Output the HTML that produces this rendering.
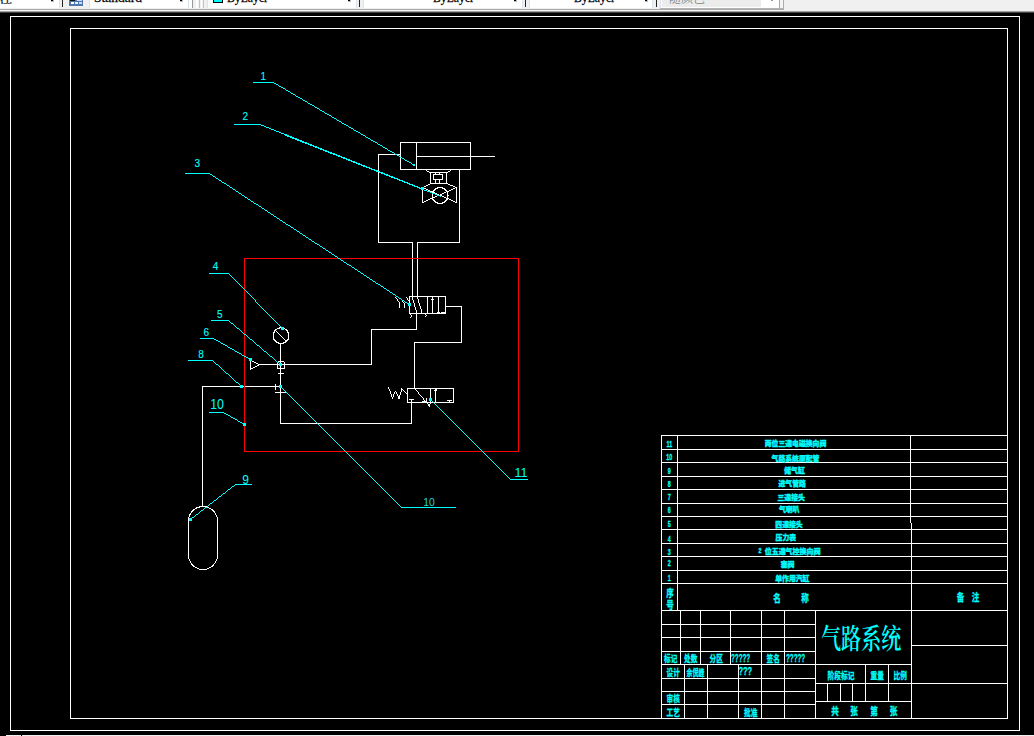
<!DOCTYPE html>
<html lang="zh"><head><meta charset="utf-8"><title>气路系统</title>
<style>
html,body{margin:0;padding:0;background:#000;}
body{width:1034px;height:736px;overflow:hidden;position:relative;font-family:"Liberation Serif","Noto Serif CJK SC",serif;}
svg{position:absolute;left:0;top:0;}
#bl{position:absolute;top:735px;height:1px;background:#f0f0f0;}
</style></head><body>
<svg width="1034" height="736" viewBox="0 0 1034 736">
<g transform="translate(0.5,0.5)" shape-rendering="crispEdges" stroke-width="1" stroke-linecap="square" fill="none">
<rect x="10" y="16" width="1009" height="714" stroke="#fff" fill="none"/>
<rect x="70" y="28" width="937" height="690" stroke="#fff" fill="none"/>
<rect x="400" y="142" width="70" height="27" stroke="#fff" fill="none"/>
<line x1="416" y1="142" x2="416" y2="169" stroke="#fff" />
<line x1="416" y1="156" x2="494" y2="156" stroke="#fff" />
<line x1="400" y1="154" x2="378" y2="154" stroke="#fff" />
<line x1="378" y1="154" x2="378" y2="242" stroke="#fff" />
<line x1="378" y1="242" x2="412" y2="242" stroke="#fff" />
<line x1="412" y1="242" x2="412" y2="296" stroke="#fff" />
<line x1="417" y1="296" x2="417" y2="242" stroke="#fff" />
<line x1="417" y1="242" x2="459" y2="242" stroke="#fff" />
<line x1="459" y1="242" x2="459" y2="169" stroke="#fff" />
<path d="M425.5 170H426.5M426.5 171H428.5M428.5 172H430.5" stroke="#fff" stroke-linecap="butt" />
<path d="M445.5 172H447.5M447.5 171H449.5M449.5 170H450.5" stroke="#fff" stroke-linecap="butt" />
<rect x="430" y="172" width="16" height="11" stroke="#fff" fill="none"/>
<rect x="433" y="174" width="9" height="5" stroke="#fff" fill="none"/>
<line x1="435" y1="172" x2="435" y2="174" stroke="#fff" />
<line x1="439" y1="172" x2="439" y2="174" stroke="#fff" />
<line x1="435" y1="179" x2="435" y2="183" stroke="#fff" />
<line x1="439" y1="179" x2="439" y2="183" stroke="#fff" />
<path d="M421.5 187H423.5M423.5 186H425.5M425.5 185H427.5M427.5 184H429.5M429.5 183H430.5" stroke="#fff" stroke-linecap="butt" />
<path d="M445.5 183H447.5M447.5 184H449.5M449.5 185H452.5M452.5 186H454.5M454.5 187H456.5" stroke="#fff" stroke-linecap="butt" />
<line x1="422" y1="187" x2="422" y2="202" stroke="#fff" />
<line x1="456" y1="187" x2="456" y2="202" stroke="#fff" />
<path d="M421.5 187H423.5M423.5 188H425.5M425.5 189H427.5M427.5 190H429.5M429.5 191H432.5M432.5 192H434.5M434.5 193H436.5M436.5 194H438.5M438.5 195H441.5M441.5 196H443.5M443.5 197H445.5M445.5 198H448.5M448.5 199H450.5M450.5 200H452.5M452.5 201H454.5M454.5 202H456.5" stroke="#fff" stroke-linecap="butt" />
<path d="M421.5 202H423.5M423.5 201H425.5M425.5 200H427.5M427.5 199H429.5M429.5 198H432.5M432.5 197H434.5M434.5 196H436.5M436.5 195H439.5M439.5 194H441.5M441.5 193H443.5M443.5 192H445.5M445.5 191H448.5M448.5 190H450.5M450.5 189H452.5M452.5 188H454.5M454.5 187H456.5" stroke="#fff" stroke-linecap="butt" />
<path d="M436.5 187H442.5M434.5 188H437.5M441.5 188H444.5M433.5 189H435.5M443.5 189H445.5M432.5 190H434.5M444.5 190H446.5M431.5 191H433.5M445.5 191H447.5M431.5 192H432.5M446.5 192H447.5M431.5 193H432.5M446.5 193H447.5M431.5 194H432.5M446.5 194H447.5M431.5 195H432.5M446.5 195H448.5M431.5 196H432.5M446.5 196H447.5M431.5 197H432.5M446.5 197H447.5M431.5 198H432.5M446.5 198H447.5M431.5 199H433.5M445.5 199H447.5M432.5 200H434.5M444.5 200H446.5M433.5 201H435.5M443.5 201H445.5M434.5 202H437.5M441.5 202H444.5M436.5 203H442.5" stroke="#fff" stroke-linecap="butt"/>
<rect x="409" y="296" width="36" height="17" stroke="#fff" fill="none"/>
<line x1="427" y1="296" x2="427" y2="313" stroke="#fff" />
<line x1="432" y1="297" x2="432" y2="313" stroke="#fff" />
<line x1="438" y1="296" x2="438" y2="313" stroke="#fff" />
<path d="M412 296.5V299.5M413 299.5V302.5M414 302.5V306.5M415 306.5V309.5M416 309.5V312.5" stroke="#fff" stroke-linecap="butt" />
<path d="M417 296.5V298.5M418 298.5V302.5M419 302.5V305.5M420 305.5V308.5M421 308.5V312.5M422 312.5V313.5" stroke="#fff" stroke-linecap="butt" />
<line x1="431" y1="299" x2="431" y2="299" stroke="#fff" />
<line x1="433" y1="299" x2="433" y2="299" stroke="#fff" />
<line x1="437" y1="312" x2="439" y2="312" stroke="#fff" />
<line x1="441" y1="312" x2="444" y2="312" stroke="#fff" />
<path d="M408.5 313H409.5M409.5 314H410.5M410.5 315H411.5" stroke="#fff" stroke-linecap="butt" />
<path d="M411 314.5V316.5M410 316.5V317.5" stroke="#fff" stroke-linecap="butt" />
<path d="M423.5 313H424.5M424.5 314H425.5M425.5 315H426.5" stroke="#fff" stroke-linecap="butt" />
<path d="M424.5 316H425.5M425.5 315H426.5" stroke="#fff" stroke-linecap="butt" />
<path d="M395 296.5V297.5M396 297.5V298.5M397 298.5V300.5M398 300.5V301.5M399 301.5V302.5" stroke="#fff" stroke-linecap="butt" />
<path d="M399 301.5V307.5" stroke="#fff" stroke-linecap="butt" />
<path d="M401 298.5V299.5M402 299.5V301.5M403 301.5V302.5M404 302.5V303.5" stroke="#fff" stroke-linecap="butt" />
<path d="M404 302.5V307.5" stroke="#fff" stroke-linecap="butt" />
<path d="M406 296.5V297.5M407 297.5V299.5M408 299.5V300.5M409 300.5V302.5" stroke="#fff" stroke-linecap="butt" />
<line x1="445" y1="306" x2="461" y2="306" stroke="#fff" />
<line x1="461" y1="306" x2="461" y2="342" stroke="#fff" />
<line x1="461" y1="342" x2="414" y2="342" stroke="#fff" />
<line x1="414" y1="342" x2="414" y2="388" stroke="#fff" />
<line x1="416" y1="313" x2="416" y2="329" stroke="#fff" />
<line x1="416" y1="329" x2="371" y2="329" stroke="#fff" />
<line x1="371" y1="329" x2="371" y2="364" stroke="#fff" />
<line x1="371" y1="364" x2="259" y2="364" stroke="#fff" />
<rect x="407" y="388" width="46" height="14" stroke="#fff" fill="none"/>
<line x1="430" y1="388" x2="430" y2="402" stroke="#fff" />
<line x1="435" y1="388" x2="435" y2="402" stroke="#fff" />
<path d="M415 388.5V389.5M416 389.5V390.5M417 390.5V391.5M418 391.5V393.5M419 393.5V394.5M420 394.5V395.5M421 395.5V396.5M422 396.5V397.5M423 397.5V399.5M424 399.5V400.5M425 400.5V401.5" stroke="#fff" stroke-linecap="butt" />
<line x1="422" y1="401" x2="426" y2="401" stroke="#fff" />
<line x1="426" y1="401" x2="426" y2="398" stroke="#fff" />
<path d="M435 387.5V389.5M434 389.5V390.5" stroke="#fff" stroke-linecap="butt" />
<path d="M435 387.5V388.5M436 388.5V390.5" stroke="#fff" stroke-linecap="butt" />
<line x1="409" y1="399" x2="413" y2="399" stroke="#fff" />
<line x1="447" y1="400" x2="451" y2="400" stroke="#fff" />
<line x1="449" y1="400" x2="449" y2="402" stroke="#fff" />
<path d="M427 401.5V403.5M428 403.5V405.5M429 405.5V406.5" stroke="#fff" stroke-linecap="butt" />
<path d="M430 401.5V403.5M429 403.5V406.5" stroke="#fff" stroke-linecap="butt" />
<path d="M388 386.5V388.5M389 388.5V390.5M390 390.5V393.5M391 393.5V396.5M392 396.5V398.5" stroke="#fff" stroke-linecap="butt" />
<path d="M395 390.5V391.5M394 391.5V393.5M393 393.5V396.5M392 396.5V398.5" stroke="#fff" stroke-linecap="butt" />
<path d="M395 390.5V391.5M396 391.5V393.5M397 393.5V395.5M398 395.5V397.5M399 397.5V398.5" stroke="#fff" stroke-linecap="butt" />
<path d="M401 387.5V391.5M400 391.5V394.5M399 394.5V397.5M398 397.5V398.5" stroke="#fff" stroke-linecap="butt" />
<path d="M401 387.5V388.5M402 388.5V389.5M403 389.5V390.5M404 390.5V391.5M405 391.5V392.5M406 392.5V393.5M407 393.5V394.5" stroke="#fff" stroke-linecap="butt" />
<line x1="411" y1="399" x2="411" y2="423" stroke="#fff" />
<line x1="411" y1="423" x2="280" y2="423" stroke="#fff" />
<line x1="280" y1="423" x2="280" y2="344" stroke="#fff" />
<path d="M278.5 327H282.5M276.5 328H279.5M281.5 328H284.5M274.5 329H276.5M284.5 329H286.5M273.5 330H275.5M285.5 330H287.5M273.5 331H274.5M286.5 331H287.5M272.5 332H274.5M286.5 332H288.5M272.5 333H273.5M287.5 333H288.5M272.5 334H273.5M287.5 334H288.5M272.5 335H273.5M287.5 335H288.5M272.5 336H273.5M287.5 336H288.5M272.5 337H273.5M287.5 337H288.5M272.5 338H273.5M287.5 338H288.5M272.5 339H274.5M286.5 339H288.5M273.5 340H275.5M285.5 340H287.5M274.5 341H276.5M284.5 341H286.5M275.5 342H278.5M282.5 342H285.5M277.5 343H283.5" stroke="#fff" stroke-linecap="butt"/>
<path d="M274.5 330H275.5M275.5 331H276.5M276.5 332H277.5M277.5 333H278.5M278.5 334H279.5M279.5 335H280.5M280.5 336H281.5M281.5 337H282.5M282.5 338H283.5M283.5 339H284.5M284.5 340H285.5M285.5 341H286.5" stroke="#fff" stroke-linecap="butt" />
<line x1="250" y1="360" x2="250" y2="369" stroke="#fff" />
<path d="M249.5 369H250.5M250.5 368H252.5M252.5 367H254.5M254.5 366H256.5M256.5 365H258.5M258.5 364H259.5" stroke="#fff" stroke-linecap="butt" />
<path d="M249.5 360H251.5M251.5 361H253.5M253.5 362H255.5M255.5 363H257.5M257.5 364H259.5" stroke="#fff" stroke-linecap="butt" />
<line x1="277" y1="362" x2="277" y2="367" stroke="#fff" />
<line x1="284" y1="362" x2="284" y2="367" stroke="#fff" />
<line x1="278" y1="361" x2="283" y2="361" stroke="#fff" />
<line x1="277" y1="368" x2="284" y2="368" stroke="#fff" />
<line x1="278" y1="373" x2="283" y2="373" stroke="#fff" />
<line x1="202" y1="386" x2="280" y2="386" stroke="#fff" />
<line x1="275" y1="384" x2="275" y2="389" stroke="#fff" />
<line x1="275" y1="392" x2="286" y2="392" stroke="#fff" />
<line x1="202" y1="386" x2="202" y2="506" stroke="#fff" />
<rect x="188" y="506" width="29" height="63" rx="14.5" ry="14.5" stroke="#fff" fill="none"/>
<rect x="244" y="258" width="274" height="193" stroke="#f00" fill="none"/>
<line x1="253" y1="82" x2="273" y2="82" stroke="#0ff" />
<path d="M272.5 82H273.5M273.5 83H275.5M275.5 84H277.5M277.5 85H278.5M278.5 86H280.5M280.5 87H282.5M282.5 88H284.5M284.5 89H285.5M285.5 90H287.5M287.5 91H289.5M289.5 92H290.5M290.5 93H292.5M292.5 94H294.5M294.5 95H295.5M295.5 96H297.5M297.5 97H299.5M299.5 98H301.5M301.5 99H302.5M302.5 100H304.5M304.5 101H306.5M306.5 102H307.5M307.5 103H309.5M309.5 104H311.5M311.5 105H313.5M313.5 106H314.5M314.5 107H316.5M316.5 108H318.5M318.5 109H319.5M319.5 110H321.5M321.5 111H323.5M323.5 112H324.5M324.5 113H326.5M326.5 114H328.5M328.5 115H330.5M330.5 116H331.5M331.5 117H333.5M333.5 118H335.5M335.5 119H336.5M336.5 120H338.5M338.5 121H340.5M340.5 122H341.5M341.5 123H343.5M343.5 124H345.5M345.5 125H347.5M347.5 126H348.5M348.5 127H350.5M350.5 128H352.5M352.5 129H353.5M353.5 130H355.5M355.5 131H357.5M357.5 132H359.5M359.5 133H360.5M360.5 134H362.5M362.5 135H364.5M364.5 136H365.5M365.5 137H367.5M367.5 138H369.5M369.5 139H370.5M370.5 140H372.5M372.5 141H374.5M374.5 142H376.5M376.5 143H377.5M377.5 144H379.5M379.5 145H381.5M381.5 146H382.5M382.5 147H384.5M384.5 148H386.5M386.5 149H387.5M387.5 150H389.5M389.5 151H391.5M391.5 152H393.5M393.5 153H394.5M394.5 154H396.5M396.5 155H398.5M398.5 156H399.5M399.5 157H401.5M401.5 158H403.5M403.5 159H404.5M404.5 160H406.5M406.5 161H408.5M408.5 162H410.5M410.5 163H411.5M411.5 164H413.5M413.5 165H414.5" stroke="#0ff" stroke-linecap="butt" />
<rect x="412.0" y="163.0" width="2" height="2" fill="#0ff" stroke="none"/>
<text transform="translate(262.7,79.3) scale(1.0,1)" font-size="10" fill="#0ff" text-anchor="middle" font-family="&quot;Liberation Sans&quot;,&quot;Noto Sans CJK SC&quot;,sans-serif" font-weight="normal"  stroke="#0ff" stroke-width="0.1">1</text>
<line x1="234" y1="124" x2="259" y2="124" stroke="#0ff" />
<path d="M259.5 124H260.5M260.5 125H263.5M263.5 126H265.5M265.5 127H268.5M268.5 128H270.5M270.5 129H273.5M273.5 130H275.5M275.5 131H278.5M278.5 132H280.5M280.5 133H283.5M283.5 134H286.5M286.5 135H288.5M288.5 136H291.5M291.5 137H293.5M293.5 138H296.5M296.5 139H298.5M298.5 140H301.5M301.5 141H303.5M303.5 142H306.5M306.5 143H308.5M308.5 144H311.5M311.5 145H313.5M313.5 146H316.5M316.5 147H318.5M318.5 148H321.5M321.5 149H323.5M323.5 150H326.5M326.5 151H328.5M328.5 152H331.5M331.5 153H334.5M334.5 154H336.5M336.5 155H339.5M339.5 156H341.5M341.5 157H344.5M344.5 158H346.5M346.5 159H349.5M349.5 160H351.5M351.5 161H354.5M354.5 162H356.5M356.5 163H359.5M359.5 164H361.5M361.5 165H364.5M364.5 166H366.5M366.5 167H369.5M369.5 168H371.5M371.5 169H374.5M374.5 170H377.5M377.5 171H379.5M379.5 172H382.5M382.5 173H384.5M384.5 174H387.5M387.5 175H389.5M389.5 176H392.5M392.5 177H394.5M394.5 178H397.5M397.5 179H399.5M399.5 180H402.5M402.5 181H404.5M404.5 182H407.5M407.5 183H409.5M409.5 184H412.5M412.5 185H414.5M414.5 186H417.5M417.5 187H419.5M419.5 188H422.5M422.5 189H423.5" stroke="#0ff" stroke-linecap="butt" />
<path d="M284.5 135H286.5M286.5 136H289.5M289.5 137H291.5M291.5 138H294.5M294.5 139H296.5M296.5 140H299.5M299.5 141H301.5M301.5 142H304.5M304.5 143H307.5M307.5 144H309.5M309.5 145H312.5M312.5 146H314.5M314.5 147H317.5M317.5 148H319.5M319.5 149H322.5M322.5 150H324.5M324.5 151H327.5M327.5 152H329.5M329.5 153H332.5M332.5 154H335.5M335.5 155H337.5M337.5 156H340.5M340.5 157H342.5M342.5 158H345.5M345.5 159H347.5M347.5 160H350.5M350.5 161H352.5M352.5 162H355.5M355.5 163H357.5M357.5 164H360.5M360.5 165H362.5M362.5 166H365.5M365.5 167H368.5M368.5 168H370.5M370.5 169H373.5M373.5 170H375.5M375.5 171H378.5M378.5 172H380.5M380.5 173H383.5M383.5 174H385.5M385.5 175H388.5M388.5 176H390.5M390.5 177H393.5M393.5 178H396.5M396.5 179H398.5M398.5 180H401.5M401.5 181H403.5M403.5 182H406.5M406.5 183H408.5M408.5 184H411.5M411.5 185H413.5M413.5 186H416.5M416.5 187H418.5M418.5 188H421.5M421.5 189H423.5M423.5 190H426.5M426.5 191H429.5M429.5 192H431.5M431.5 193H434.5M434.5 194H436.5M436.5 195H439.5M439.5 196H440.5" stroke="#0ff" stroke-linecap="butt" />
<rect x="420.5" y="186.5" width="3" height="3" fill="#0ff" stroke="none"/>
<text transform="translate(244.7,119.2) scale(1.0,1)" font-size="10" fill="#0ff" text-anchor="middle" font-family="&quot;Liberation Sans&quot;,&quot;Noto Sans CJK SC&quot;,sans-serif" font-weight="normal"  stroke="#0ff" stroke-width="0.1">2</text>
<line x1="185" y1="173" x2="209" y2="173" stroke="#0ff" />
<path d="M208.5 173H209.5M209.5 174H211.5M211.5 175H212.5M212.5 176H214.5M214.5 177H215.5M215.5 178H217.5M217.5 179H218.5M218.5 180H220.5M220.5 181H221.5M221.5 182H223.5M223.5 183H225.5M225.5 184H226.5M226.5 185H228.5M228.5 186H229.5M229.5 187H231.5M231.5 188H232.5M232.5 189H234.5M234.5 190H235.5M235.5 191H237.5M237.5 192H238.5M238.5 193H240.5M240.5 194H241.5M241.5 195H243.5M243.5 196H244.5M244.5 197H246.5M246.5 198H247.5M247.5 199H249.5M249.5 200H250.5M250.5 201H252.5M252.5 202H253.5M253.5 203H255.5M255.5 204H257.5M257.5 205H258.5M258.5 206H260.5M260.5 207H261.5M261.5 208H263.5M263.5 209H264.5M264.5 210H266.5M266.5 211H267.5M267.5 212H269.5M269.5 213H270.5M270.5 214H272.5M272.5 215H273.5M273.5 216H275.5M275.5 217H276.5M276.5 218H278.5M278.5 219H279.5M279.5 220H281.5M281.5 221H282.5M282.5 222H284.5M284.5 223H285.5M285.5 224H287.5M287.5 225H289.5M289.5 226H290.5M290.5 227H292.5M292.5 228H293.5M293.5 229H295.5M295.5 230H296.5M296.5 231H298.5M298.5 232H299.5M299.5 233H301.5M301.5 234H302.5M302.5 235H304.5M304.5 236H305.5M305.5 237H307.5M307.5 238H308.5M308.5 239H310.5M310.5 240H311.5M311.5 241H313.5M313.5 242H314.5M314.5 243H316.5M316.5 244H318.5M318.5 245H319.5M319.5 246H321.5M321.5 247H322.5M322.5 248H324.5M324.5 249H325.5M325.5 250H327.5M327.5 251H328.5M328.5 252H330.5M330.5 253H331.5M331.5 254H333.5M333.5 255H334.5M334.5 256H336.5M336.5 257H337.5M337.5 258H339.5M339.5 259H340.5M340.5 260H342.5M342.5 261H343.5M343.5 262H345.5M345.5 263H346.5M346.5 264H348.5M348.5 265H350.5M350.5 266H351.5M351.5 267H353.5M353.5 268H354.5M354.5 269H356.5M356.5 270H357.5M357.5 271H359.5M359.5 272H360.5M360.5 273H362.5M362.5 274H363.5M363.5 275H365.5M365.5 276H366.5M366.5 277H368.5M368.5 278H369.5M369.5 279H371.5M371.5 280H372.5M372.5 281H374.5M374.5 282H375.5M375.5 283H377.5M377.5 284H379.5M379.5 285H380.5M380.5 286H382.5M382.5 287H383.5M383.5 288H385.5M385.5 289H386.5M386.5 290H388.5M388.5 291H389.5M389.5 292H391.5M391.5 293H392.5M392.5 294H394.5M394.5 295H395.5M395.5 296H397.5M397.5 297H398.5M398.5 298H400.5M400.5 299H401.5M401.5 300H403.5M403.5 301H404.5M404.5 302H406.5M406.5 303H407.5M407.5 304H409.5M409.5 305H410.5" stroke="#0ff" stroke-linecap="butt" />
<rect x="407.5" y="302.5" width="3" height="3" fill="#0ff" stroke="none"/>
<text transform="translate(196.9,166.3) scale(1.0,1)" font-size="10" fill="#0ff" text-anchor="middle" font-family="&quot;Liberation Sans&quot;,&quot;Noto Sans CJK SC&quot;,sans-serif" font-weight="normal"  stroke="#0ff" stroke-width="0.1">3</text>
<line x1="209" y1="273" x2="228" y2="273" stroke="#0ff" />
<path d="M228 272.5V273.5M229 273.5V274.5M230 274.5V275.5M231 275.5V276.5M232 276.5V277.5M233 277.5V278.5M234 278.5V279.5M235 279.5V280.5M236 280.5V281.5M237 281.5V282.5M238 282.5V283.5M239 283.5V284.5M240 284.5V285.5M241 285.5V286.5M242 286.5V287.5M243 287.5V288.5M244 288.5V289.5M245 289.5V290.5M246 290.5V291.5M247 291.5V292.5M248 292.5V293.5M249 293.5V294.5M250 294.5V295.5M251 295.5V296.5M252 296.5V297.5M253 297.5V298.5M254 298.5V299.5M255 299.5V301.5M256 301.5V302.5M257 302.5V303.5M258 303.5V304.5M259 304.5V305.5M260 305.5V306.5M261 306.5V307.5M262 307.5V308.5M263 308.5V309.5M264 309.5V310.5M265 310.5V311.5M266 311.5V312.5M267 312.5V313.5M268 313.5V314.5M269 314.5V315.5M270 315.5V316.5M271 316.5V317.5M272 317.5V318.5M273 318.5V319.5M274 319.5V320.5M275 320.5V321.5M276 321.5V322.5M277 322.5V323.5M278 323.5V324.5M279 324.5V325.5M280 325.5V326.5M281 326.5V327.5M282 327.5V328.5M283 328.5V329.5" stroke="#0ff" stroke-linecap="butt" />
<rect x="280.5" y="326.5" width="3" height="3" fill="#0ff" stroke="none"/>
<text transform="translate(215.1,269.3) scale(1.0,1)" font-size="10" fill="#0ff" text-anchor="middle" font-family="&quot;Liberation Sans&quot;,&quot;Noto Sans CJK SC&quot;,sans-serif" font-weight="normal"  stroke="#0ff" stroke-width="0.1">4</text>
<line x1="211" y1="320" x2="228" y2="320" stroke="#0ff" />
<path d="M227.5 320H228.5M228.5 321H229.5M229.5 322H230.5M230.5 323H232.5M232.5 324H233.5M233.5 325H234.5M234.5 326H235.5M235.5 327H236.5M236.5 328H238.5M238.5 329H239.5M239.5 330H240.5M240.5 331H241.5M241.5 332H242.5M242.5 333H243.5M243.5 334H245.5M245.5 335H246.5M246.5 336H247.5M247.5 337H248.5M248.5 338H249.5M249.5 339H251.5M251.5 340H252.5M252.5 341H253.5M253.5 342H254.5M254.5 343H255.5M255.5 344H256.5M256.5 345H258.5M258.5 346H259.5M259.5 347H260.5M260.5 348H261.5M261.5 349H262.5M262.5 350H263.5M263.5 351H265.5M265.5 352H266.5M266.5 353H267.5M267.5 354H268.5M268.5 355H269.5M269.5 356H271.5M271.5 357H272.5M272.5 358H273.5M273.5 359H274.5M274.5 360H275.5M275.5 361H276.5M276.5 362H278.5M278.5 363H279.5M279.5 364H280.5M280.5 365H281.5" stroke="#0ff" stroke-linecap="butt" />
<rect x="278.5" y="362.5" width="3" height="3" fill="#0ff" stroke="none"/>
<text transform="translate(219.3,317) scale(1.0,1)" font-size="10" fill="#0ff" text-anchor="middle" font-family="&quot;Liberation Sans&quot;,&quot;Noto Sans CJK SC&quot;,sans-serif" font-weight="normal"  stroke="#0ff" stroke-width="0.1">5</text>
<line x1="200" y1="338" x2="213" y2="338" stroke="#0ff" />
<path d="M212.5 338H213.5M213.5 339H215.5M215.5 340H217.5M217.5 341H219.5M219.5 342H220.5M220.5 343H222.5M222.5 344H224.5M224.5 345H226.5M226.5 346H227.5M227.5 347H229.5M229.5 348H231.5M231.5 349H233.5M233.5 350H234.5M234.5 351H236.5M236.5 352H238.5M238.5 353H240.5M240.5 354H241.5M241.5 355H243.5M243.5 356H245.5M245.5 357H247.5M247.5 358H248.5M248.5 359H250.5M250.5 360H251.5" stroke="#0ff" stroke-linecap="butt" />
<rect x="248.5" y="357.5" width="3" height="3" fill="#0ff" stroke="none"/>
<text transform="translate(205.7,335) scale(1.0,1)" font-size="10" fill="#0ff" text-anchor="middle" font-family="&quot;Liberation Sans&quot;,&quot;Noto Sans CJK SC&quot;,sans-serif" font-weight="normal"  stroke="#0ff" stroke-width="0.1">6</text>
<line x1="188" y1="360" x2="212" y2="360" stroke="#0ff" />
<path d="M211.5 360H212.5M212.5 361H213.5M213.5 362H214.5M214.5 363H215.5M215.5 364H217.5M217.5 365H218.5M218.5 366H219.5M219.5 367H220.5M220.5 368H221.5M221.5 369H222.5M222.5 370H223.5M223.5 371H224.5M224.5 372H225.5M225.5 373H227.5M227.5 374H228.5M228.5 375H229.5M229.5 376H230.5M230.5 377H231.5M231.5 378H232.5M232.5 379H233.5M233.5 380H234.5M234.5 381H235.5M235.5 382H237.5M237.5 383H238.5M238.5 384H239.5M239.5 385H240.5M240.5 386H241.5M241.5 387H242.5" stroke="#0ff" stroke-linecap="butt" />
<rect x="239.5" y="384.5" width="3" height="3" fill="#0ff" stroke="none"/>
<text transform="translate(200.6,357.4) scale(1.0,1)" font-size="10" fill="#0ff" text-anchor="middle" font-family="&quot;Liberation Sans&quot;,&quot;Noto Sans CJK SC&quot;,sans-serif" font-weight="normal"  stroke="#0ff" stroke-width="0.1">8</text>
<line x1="235" y1="484" x2="251" y2="484" stroke="#0ff" />
<path d="M189.5 519H190.5M190.5 518H191.5M191.5 517H193.5M193.5 516H194.5M194.5 515H195.5M195.5 514H197.5M197.5 513H198.5M198.5 512H199.5M199.5 511H200.5M200.5 510H202.5M202.5 509H203.5M203.5 508H204.5M204.5 507H206.5M206.5 506H207.5M207.5 505H208.5M208.5 504H209.5M209.5 503H211.5M211.5 502H212.5M212.5 501H213.5M213.5 500H215.5M215.5 499H216.5M216.5 498H217.5M217.5 497H218.5M218.5 496H220.5M220.5 495H221.5M221.5 494H222.5M222.5 493H224.5M224.5 492H225.5M225.5 491H226.5M226.5 490H227.5M227.5 489H229.5M229.5 488H230.5M230.5 487H231.5M231.5 486H233.5M233.5 485H234.5M234.5 484H235.5" stroke="#0ff" stroke-linecap="butt" />
<rect x="188.0" y="517.0" width="3" height="3" fill="#0ff" stroke="none"/>
<text transform="translate(245,483.5) scale(1.0,1)" font-size="12" fill="#0ff" text-anchor="middle" font-family="&quot;Liberation Sans&quot;,&quot;Noto Sans CJK SC&quot;,sans-serif" font-weight="normal" >9</text>
<line x1="209" y1="412" x2="223" y2="412" stroke="#0ff" />
<path d="M222.5 412H223.5M223.5 413H225.5M225.5 414H227.5M227.5 415H229.5M229.5 416H230.5M230.5 417H232.5M232.5 418H234.5M234.5 419H236.5M236.5 420H237.5M237.5 421H239.5M239.5 422H241.5M241.5 423H243.5M243.5 424H244.5" stroke="#0ff" stroke-linecap="butt" />
<rect x="242.0" y="422.0" width="3" height="3" fill="#0ff" stroke="none"/>
<text transform="translate(216.5,408.7) scale(0.88,1)" font-size="14" fill="#0ff" text-anchor="middle" font-family="&quot;Liberation Sans&quot;,&quot;Noto Sans CJK SC&quot;,sans-serif" font-weight="normal" >10</text>
<line x1="401" y1="507" x2="455" y2="507" stroke="#0ff" />
<path d="M280.5 387H281.5M281.5 388H282.5M282.5 389H283.5M283.5 390H284.5M284.5 391H285.5M285.5 392H286.5M286.5 393H287.5M287.5 394H288.5M288.5 395H289.5M289.5 396H290.5M290.5 397H291.5M291.5 398H292.5M292.5 399H293.5M293.5 400H294.5M294.5 401H295.5M295.5 402H296.5M296.5 403H297.5M297.5 404H298.5M298.5 405H299.5M299.5 406H300.5M300.5 407H301.5M301.5 408H302.5M302.5 409H303.5M303.5 410H304.5M304.5 411H305.5M305.5 412H306.5M306.5 413H307.5M307.5 414H308.5M308.5 415H309.5M309.5 416H310.5M310.5 417H311.5M311.5 418H312.5M312.5 419H313.5M313.5 420H314.5M314.5 421H315.5M315.5 422H316.5M316.5 423H317.5M317.5 424H318.5M318.5 425H319.5M319.5 426H320.5M320.5 427H321.5M321.5 428H322.5M322.5 429H323.5M323.5 430H324.5M324.5 431H325.5M325.5 432H326.5M326.5 433H327.5M327.5 434H328.5M328.5 435H329.5M329.5 436H330.5M330.5 437H331.5M331.5 438H332.5M332.5 439H333.5M333.5 440H334.5M334.5 441H335.5M335.5 442H336.5M336.5 443H337.5M337.5 444H338.5M338.5 445H339.5M339.5 446H340.5M340.5 447H341.5M341.5 448H342.5M342.5 449H343.5M343.5 450H344.5M344.5 451H345.5M345.5 452H346.5M346.5 453H347.5M347.5 454H348.5M348.5 455H349.5M349.5 456H350.5M350.5 457H351.5M351.5 458H352.5M352.5 459H353.5M353.5 460H354.5M354.5 461H355.5M355.5 462H356.5M356.5 463H357.5M357.5 464H358.5M358.5 465H359.5M359.5 466H360.5M360.5 467H361.5M361.5 468H362.5M362.5 469H363.5M363.5 470H364.5M364.5 471H365.5M365.5 472H366.5M366.5 473H367.5M367.5 474H368.5M368.5 475H369.5M369.5 476H370.5M370.5 477H371.5M371.5 478H372.5M372.5 479H373.5M373.5 480H374.5M374.5 481H375.5M375.5 482H376.5M376.5 483H377.5M377.5 484H378.5M378.5 485H379.5M379.5 486H380.5M380.5 487H381.5M381.5 488H382.5M382.5 489H383.5M383.5 490H384.5M384.5 491H385.5M385.5 492H386.5M386.5 493H387.5M387.5 494H388.5M388.5 495H389.5M389.5 496H390.5M390.5 497H391.5M391.5 498H392.5M392.5 499H393.5M393.5 500H394.5M394.5 501H395.5M395.5 502H396.5M396.5 503H397.5M397.5 504H398.5M398.5 505H399.5M399.5 506H400.5M400.5 507H401.5" stroke="#0ff" stroke-linecap="butt" />
<rect x="278.5" y="384.5" width="3" height="3" fill="#0ff" stroke="none"/>
<text transform="translate(428.6,505.2) scale(0.9,1)" font-size="11.5" fill="#22d4dc" text-anchor="middle" font-family="&quot;Liberation Sans&quot;,&quot;Noto Sans CJK SC&quot;,sans-serif" font-weight="normal" >10</text>
<line x1="510" y1="479" x2="527" y2="479" stroke="#0ff" />
<path d="M430.5 400H431.5M431.5 401H432.5M432.5 402H433.5M433.5 403H434.5M434.5 404H435.5M435.5 405H436.5M436.5 406H437.5M437.5 407H438.5M438.5 408H439.5M439.5 409H440.5M440.5 410H441.5M441.5 411H442.5M442.5 412H443.5M443.5 413H444.5M444.5 414H445.5M445.5 415H446.5M446.5 416H447.5M447.5 417H448.5M448.5 418H449.5M449.5 419H450.5M450.5 420H451.5M451.5 421H452.5M452.5 422H453.5M453.5 423H454.5M454.5 424H455.5M455.5 425H456.5M456.5 426H457.5M457.5 427H458.5M458.5 428H459.5M459.5 429H460.5M460.5 430H461.5M461.5 431H462.5M462.5 432H463.5M463.5 433H464.5M464.5 434H465.5M465.5 435H466.5M466.5 436H467.5M467.5 437H468.5M468.5 438H469.5M469.5 439H470.5M470.5 440H471.5M471.5 441H472.5M472.5 442H473.5M473.5 443H474.5M474.5 444H475.5M475.5 445H476.5M476.5 446H477.5M477.5 447H478.5M478.5 448H479.5M479.5 449H480.5M480.5 450H481.5M481.5 451H482.5M482.5 452H483.5M483.5 453H484.5M484.5 454H485.5M485.5 455H486.5M486.5 456H487.5M487.5 457H488.5M488.5 458H489.5M489.5 459H490.5M490.5 460H491.5M491.5 461H492.5M492.5 462H493.5M493.5 463H494.5M494.5 464H495.5M495.5 465H496.5M496.5 466H497.5M497.5 467H498.5M498.5 468H499.5M499.5 469H500.5M500.5 470H501.5M501.5 471H502.5M502.5 472H503.5M503.5 473H504.5M504.5 474H505.5M505.5 475H506.5M506.5 476H507.5M507.5 477H508.5M508.5 478H509.5M509.5 479H510.5" stroke="#0ff" stroke-linecap="butt" />
<rect x="428.5" y="397.5" width="3" height="3" fill="#0ff" stroke="none"/>
<text transform="translate(520.5,476.6) scale(1.0,1)" font-size="12.5" fill="#0ff" text-anchor="middle" font-family="&quot;Liberation Sans&quot;,&quot;Noto Sans CJK SC&quot;,sans-serif" font-weight="normal" >11</text>
<line x1="661" y1="435" x2="1007" y2="435" stroke="#fff" />
<line x1="661" y1="449" x2="1007" y2="449" stroke="#fff" />
<line x1="661" y1="462" x2="1007" y2="462" stroke="#fff" />
<line x1="661" y1="476" x2="1007" y2="476" stroke="#fff" />
<line x1="661" y1="489" x2="1007" y2="489" stroke="#fff" />
<line x1="661" y1="503" x2="1007" y2="503" stroke="#fff" />
<line x1="661" y1="516" x2="1007" y2="516" stroke="#fff" />
<line x1="661" y1="529" x2="1007" y2="529" stroke="#fff" />
<line x1="661" y1="543" x2="1007" y2="543" stroke="#fff" />
<line x1="661" y1="556" x2="1007" y2="556" stroke="#fff" />
<line x1="661" y1="570" x2="1007" y2="570" stroke="#fff" />
<line x1="661" y1="583" x2="1007" y2="583" stroke="#fff" />
<line x1="661" y1="610" x2="1007" y2="610" stroke="#fff" />
<line x1="661" y1="435" x2="661" y2="718" stroke="#fff" />
<line x1="677" y1="435" x2="677" y2="610" stroke="#fff" />
<line x1="910" y1="435" x2="910" y2="522" stroke="#fff" />
<line x1="911" y1="523" x2="911" y2="718" stroke="#fff" />
<text transform="translate(668.8,446) scale(0.6,1)" font-size="9" fill="#0ff" text-anchor="middle" font-family="&quot;Liberation Sans&quot;,&quot;Noto Sans CJK SC&quot;,sans-serif" font-weight="bold"  stroke="#0ff" stroke-width="0.3">11</text>
<text transform="translate(795,445.09999999999997) scale(0.95,1)" font-size="7.2" fill="#0ff" text-anchor="middle" font-family="&quot;Liberation Sans&quot;,&quot;Noto Sans CJK SC&quot;,sans-serif" font-weight="900"  stroke="#0ff" stroke-width="0.35">两位三通电磁换向阀</text>
<text transform="translate(668.8,459) scale(0.6,1)" font-size="9" fill="#0ff" text-anchor="middle" font-family="&quot;Liberation Sans&quot;,&quot;Noto Sans CJK SC&quot;,sans-serif" font-weight="bold"  stroke="#0ff" stroke-width="0.3">10</text>
<text transform="translate(795,460.09999999999997) scale(0.95,1)" font-size="7.2" fill="#0ff" text-anchor="middle" font-family="&quot;Liberation Sans&quot;,&quot;Noto Sans CJK SC&quot;,sans-serif" font-weight="900"  stroke="#0ff" stroke-width="0.35">气路系统原配管</text>
<text transform="translate(668.8,473) scale(0.6,1)" font-size="9" fill="#0ff" text-anchor="middle" font-family="&quot;Liberation Sans&quot;,&quot;Noto Sans CJK SC&quot;,sans-serif" font-weight="bold"  stroke="#0ff" stroke-width="0.3">9</text>
<text transform="translate(794,472.0) scale(0.95,1)" font-size="7.2" fill="#0ff" text-anchor="middle" font-family="&quot;Liberation Sans&quot;,&quot;Noto Sans CJK SC&quot;,sans-serif" font-weight="900"  stroke="#0ff" stroke-width="0.35">储气缸</text>
<text transform="translate(668.8,486) scale(0.6,1)" font-size="9" fill="#0ff" text-anchor="middle" font-family="&quot;Liberation Sans&quot;,&quot;Noto Sans CJK SC&quot;,sans-serif" font-weight="bold"  stroke="#0ff" stroke-width="0.3">8</text>
<text transform="translate(791.7,485.59999999999997) scale(0.95,1)" font-size="7.2" fill="#0ff" text-anchor="middle" font-family="&quot;Liberation Sans&quot;,&quot;Noto Sans CJK SC&quot;,sans-serif" font-weight="900"  stroke="#0ff" stroke-width="0.35">进气管路</text>
<text transform="translate(668.8,499.7) scale(0.6,1)" font-size="9" fill="#0ff" text-anchor="middle" font-family="&quot;Liberation Sans&quot;,&quot;Noto Sans CJK SC&quot;,sans-serif" font-weight="bold"  stroke="#0ff" stroke-width="0.3">7</text>
<text transform="translate(790.7,499.3) scale(0.95,1)" font-size="7.2" fill="#0ff" text-anchor="middle" font-family="&quot;Liberation Sans&quot;,&quot;Noto Sans CJK SC&quot;,sans-serif" font-weight="900"  stroke="#0ff" stroke-width="0.35">三通接头</text>
<text transform="translate(668.8,512) scale(0.6,1)" font-size="9" fill="#0ff" text-anchor="middle" font-family="&quot;Liberation Sans&quot;,&quot;Noto Sans CJK SC&quot;,sans-serif" font-weight="bold"  stroke="#0ff" stroke-width="0.3">6</text>
<text transform="translate(788.7,511.90000000000003) scale(0.95,1)" font-size="7.2" fill="#0ff" text-anchor="middle" font-family="&quot;Liberation Sans&quot;,&quot;Noto Sans CJK SC&quot;,sans-serif" font-weight="900"  stroke="#0ff" stroke-width="0.35">气喇叭</text>
<text transform="translate(668.8,526) scale(0.6,1)" font-size="9" fill="#0ff" text-anchor="middle" font-family="&quot;Liberation Sans&quot;,&quot;Noto Sans CJK SC&quot;,sans-serif" font-weight="bold"  stroke="#0ff" stroke-width="0.3">5</text>
<text transform="translate(788.5,526.4000000000001) scale(0.95,1)" font-size="7.2" fill="#0ff" text-anchor="middle" font-family="&quot;Liberation Sans&quot;,&quot;Noto Sans CJK SC&quot;,sans-serif" font-weight="900"  stroke="#0ff" stroke-width="0.35">四通接头</text>
<text transform="translate(668.8,541) scale(0.6,1)" font-size="9" fill="#0ff" text-anchor="middle" font-family="&quot;Liberation Sans&quot;,&quot;Noto Sans CJK SC&quot;,sans-serif" font-weight="bold"  stroke="#0ff" stroke-width="0.3">4</text>
<text transform="translate(785.3,539.8000000000001) scale(0.95,1)" font-size="7.2" fill="#0ff" text-anchor="middle" font-family="&quot;Liberation Sans&quot;,&quot;Noto Sans CJK SC&quot;,sans-serif" font-weight="900"  stroke="#0ff" stroke-width="0.35">压力表</text>
<text transform="translate(668.8,554) scale(0.6,1)" font-size="9" fill="#0ff" text-anchor="middle" font-family="&quot;Liberation Sans&quot;,&quot;Noto Sans CJK SC&quot;,sans-serif" font-weight="bold"  stroke="#0ff" stroke-width="0.3">3</text>
<text transform="translate(758,552.3) scale(0.8,1)" font-size="6.5" fill="#0ff" text-anchor="start" font-family="&quot;Liberation Sans&quot;,&quot;Noto Sans CJK SC&quot;,sans-serif" font-weight="bold"  stroke="#0ff" stroke-width="0.4">2</text>
<text transform="translate(764.2,553.7) scale(0.97,1)" font-size="7.2" fill="#0ff" text-anchor="start" font-family="&quot;Liberation Sans&quot;,&quot;Noto Sans CJK SC&quot;,sans-serif" font-weight="900"  stroke="#0ff" stroke-width="0.35">位五通气控换向阀</text>
<text transform="translate(668.8,565.7) scale(0.6,1)" font-size="9" fill="#0ff" text-anchor="middle" font-family="&quot;Liberation Sans&quot;,&quot;Noto Sans CJK SC&quot;,sans-serif" font-weight="bold"  stroke="#0ff" stroke-width="0.3">2</text>
<text transform="translate(787,566.7) scale(0.95,1)" font-size="7.2" fill="#0ff" text-anchor="middle" font-family="&quot;Liberation Sans&quot;,&quot;Noto Sans CJK SC&quot;,sans-serif" font-weight="900"  stroke="#0ff" stroke-width="0.35">塞阀</text>
<text transform="translate(668.8,580) scale(0.6,1)" font-size="9" fill="#0ff" text-anchor="middle" font-family="&quot;Liberation Sans&quot;,&quot;Noto Sans CJK SC&quot;,sans-serif" font-weight="bold"  stroke="#0ff" stroke-width="0.3">1</text>
<text transform="translate(791.8,580.4000000000001) scale(0.95,1)" font-size="7.2" fill="#0ff" text-anchor="middle" font-family="&quot;Liberation Sans&quot;,&quot;Noto Sans CJK SC&quot;,sans-serif" font-weight="900"  stroke="#0ff" stroke-width="0.35">单作用汽缸</text>
<text transform="translate(669.5,596.5) scale(0.72,1)" font-size="10.5" fill="#0ff" text-anchor="middle" font-family="&quot;Liberation Sans&quot;,&quot;Noto Sans CJK SC&quot;,sans-serif" font-weight="bold"  stroke="#0ff" stroke-width="0.3">序</text>
<text transform="translate(669.5,608.5) scale(0.72,1)" font-size="10.5" fill="#0ff" text-anchor="middle" font-family="&quot;Liberation Sans&quot;,&quot;Noto Sans CJK SC&quot;,sans-serif" font-weight="bold"  stroke="#0ff" stroke-width="0.3">号</text>
<text transform="translate(776.5,601.7) scale(0.72,1)" font-size="10.5" fill="#0ff" text-anchor="middle" font-family="&quot;Liberation Sans&quot;,&quot;Noto Sans CJK SC&quot;,sans-serif" font-weight="bold"  stroke="#0ff" stroke-width="0.3">名</text>
<text transform="translate(804.5,601.7) scale(0.72,1)" font-size="10.5" fill="#0ff" text-anchor="middle" font-family="&quot;Liberation Sans&quot;,&quot;Noto Sans CJK SC&quot;,sans-serif" font-weight="bold"  stroke="#0ff" stroke-width="0.3">称</text>
<text transform="translate(960,600.6) scale(0.72,1)" font-size="10.5" fill="#0ff" text-anchor="middle" font-family="&quot;Liberation Sans&quot;,&quot;Noto Sans CJK SC&quot;,sans-serif" font-weight="bold"  stroke="#0ff" stroke-width="0.3">备</text>
<text transform="translate(975,600.6) scale(0.72,1)" font-size="10.5" fill="#0ff" text-anchor="middle" font-family="&quot;Liberation Sans&quot;,&quot;Noto Sans CJK SC&quot;,sans-serif" font-weight="bold"  stroke="#0ff" stroke-width="0.3">注</text>
<line x1="661" y1="624" x2="815" y2="624" stroke="#fff" />
<line x1="661" y1="637" x2="815" y2="637" stroke="#fff" />
<line x1="661" y1="651" x2="815" y2="651" stroke="#fff" />
<line x1="661" y1="664" x2="911" y2="664" stroke="#fff" />
<line x1="661" y1="678" x2="815" y2="678" stroke="#fff" />
<line x1="661" y1="691" x2="815" y2="691" stroke="#fff" />
<line x1="661" y1="704" x2="815" y2="704" stroke="#fff" />
<line x1="680" y1="610" x2="680" y2="664" stroke="#fff" />
<line x1="700" y1="610" x2="700" y2="664" stroke="#fff" />
<line x1="730" y1="610" x2="730" y2="664" stroke="#fff" />
<line x1="684" y1="664" x2="684" y2="718" stroke="#fff" />
<line x1="707" y1="664" x2="707" y2="718" stroke="#fff" />
<line x1="738" y1="664" x2="738" y2="718" stroke="#fff" />
<line x1="761" y1="610" x2="761" y2="718" stroke="#fff" />
<line x1="784" y1="610" x2="784" y2="718" stroke="#fff" />
<line x1="815" y1="610" x2="815" y2="718" stroke="#fff" />
<line x1="911" y1="645" x2="1007" y2="645" stroke="#fff" />
<line x1="815" y1="683" x2="1007" y2="683" stroke="#fff" />
<line x1="815" y1="701" x2="911" y2="701" stroke="#fff" />
<line x1="865" y1="664" x2="865" y2="701" stroke="#fff" />
<line x1="888" y1="664" x2="888" y2="701" stroke="#fff" />
<line x1="827" y1="683" x2="827" y2="701" stroke="#fff" />
<line x1="840" y1="683" x2="840" y2="701" stroke="#fff" />
<line x1="852" y1="683" x2="852" y2="701" stroke="#fff" />
<text transform="translate(663.5,661.3) scale(0.7,1)" font-size="9.5" fill="#0ff" text-anchor="start" font-family="&quot;Liberation Sans&quot;,&quot;Noto Sans CJK SC&quot;,sans-serif" font-weight="bold"  stroke="#0ff" stroke-width="0.3">标记</text>
<text transform="translate(683.5,661.3) scale(0.7,1)" font-size="9.5" fill="#0ff" text-anchor="start" font-family="&quot;Liberation Sans&quot;,&quot;Noto Sans CJK SC&quot;,sans-serif" font-weight="bold"  stroke="#0ff" stroke-width="0.3">处数</text>
<text transform="translate(709,661.3) scale(0.7,1)" font-size="9.5" fill="#0ff" text-anchor="start" font-family="&quot;Liberation Sans&quot;,&quot;Noto Sans CJK SC&quot;,sans-serif" font-weight="bold"  stroke="#0ff" stroke-width="0.3">分区</text>
<text transform="translate(730.5,661.3) scale(0.57,1)" font-size="11" fill="#0ff" text-anchor="start" font-family="&quot;Liberation Sans&quot;,&quot;Noto Sans CJK SC&quot;,sans-serif" font-weight="bold"  stroke="#0ff" stroke-width="0.3">?????</text>
<text transform="translate(766,661.3) scale(0.7,1)" font-size="9.5" fill="#0ff" text-anchor="start" font-family="&quot;Liberation Sans&quot;,&quot;Noto Sans CJK SC&quot;,sans-serif" font-weight="bold"  stroke="#0ff" stroke-width="0.3">签名</text>
<text transform="translate(785.5,661.3) scale(0.57,1)" font-size="11" fill="#0ff" text-anchor="start" font-family="&quot;Liberation Sans&quot;,&quot;Noto Sans CJK SC&quot;,sans-serif" font-weight="bold"  stroke="#0ff" stroke-width="0.3">?????</text>
<text transform="translate(666,675) scale(0.7,1)" font-size="9.5" fill="#0ff" text-anchor="start" font-family="&quot;Liberation Sans&quot;,&quot;Noto Sans CJK SC&quot;,sans-serif" font-weight="bold"  stroke="#0ff" stroke-width="0.3">设计</text>
<text transform="translate(686,675) scale(0.63,1)" font-size="9.5" fill="#0ff" text-anchor="start" font-family="&quot;Liberation Sans&quot;,&quot;Noto Sans CJK SC&quot;,sans-serif" font-weight="bold"  stroke="#0ff" stroke-width="0.3">余倪峰</text>
<text transform="translate(738,674.5) scale(0.68,1)" font-size="11" fill="#0ff" text-anchor="start" font-family="&quot;Liberation Sans&quot;,&quot;Noto Sans CJK SC&quot;,sans-serif" font-weight="bold"  stroke="#0ff" stroke-width="0.3">???</text>
<text transform="translate(666,701.8) scale(0.7,1)" font-size="9.5" fill="#0ff" text-anchor="start" font-family="&quot;Liberation Sans&quot;,&quot;Noto Sans CJK SC&quot;,sans-serif" font-weight="bold"  stroke="#0ff" stroke-width="0.3">审核</text>
<text transform="translate(666,715.3) scale(0.7,1)" font-size="9.5" fill="#0ff" text-anchor="start" font-family="&quot;Liberation Sans&quot;,&quot;Noto Sans CJK SC&quot;,sans-serif" font-weight="bold"  stroke="#0ff" stroke-width="0.3">工艺</text>
<text transform="translate(743.5,715.3) scale(0.7,1)" font-size="9.5" fill="#0ff" text-anchor="start" font-family="&quot;Liberation Sans&quot;,&quot;Noto Sans CJK SC&quot;,sans-serif" font-weight="bold"  stroke="#0ff" stroke-width="0.3">批准</text>
<text transform="translate(827,678.5) scale(0.71,1)" font-size="9.5" fill="#0ff" text-anchor="start" font-family="&quot;Liberation Sans&quot;,&quot;Noto Sans CJK SC&quot;,sans-serif" font-weight="bold"  stroke="#0ff" stroke-width="0.3">阶段标记</text>
<text transform="translate(870,678.5) scale(0.7,1)" font-size="9.5" fill="#0ff" text-anchor="start" font-family="&quot;Liberation Sans&quot;,&quot;Noto Sans CJK SC&quot;,sans-serif" font-weight="bold"  stroke="#0ff" stroke-width="0.3">重量</text>
<text transform="translate(893,678.5) scale(0.7,1)" font-size="9.5" fill="#0ff" text-anchor="start" font-family="&quot;Liberation Sans&quot;,&quot;Noto Sans CJK SC&quot;,sans-serif" font-weight="bold"  stroke="#0ff" stroke-width="0.3">比例</text>
<text transform="translate(834.5,714.5) scale(0.72,1)" font-size="10.5" fill="#0ff" text-anchor="middle" font-family="&quot;Liberation Sans&quot;,&quot;Noto Sans CJK SC&quot;,sans-serif" font-weight="bold"  stroke="#0ff" stroke-width="0.3">共</text>
<text transform="translate(853.5,714.5) scale(0.72,1)" font-size="10.5" fill="#0ff" text-anchor="middle" font-family="&quot;Liberation Sans&quot;,&quot;Noto Sans CJK SC&quot;,sans-serif" font-weight="bold"  stroke="#0ff" stroke-width="0.3">张</text>
<text transform="translate(873.5,714.5) scale(0.72,1)" font-size="10.5" fill="#0ff" text-anchor="middle" font-family="&quot;Liberation Sans&quot;,&quot;Noto Sans CJK SC&quot;,sans-serif" font-weight="bold"  stroke="#0ff" stroke-width="0.3">第</text>
<text transform="translate(893,714.5) scale(0.72,1)" font-size="10.5" fill="#0ff" text-anchor="middle" font-family="&quot;Liberation Sans&quot;,&quot;Noto Sans CJK SC&quot;,sans-serif" font-weight="bold"  stroke="#0ff" stroke-width="0.3">张</text>
<text transform="translate(820.5,648) scale(0.705,1)" font-size="28.5" fill="#0ff" text-anchor="start" font-family="&quot;Liberation Serif&quot;,&quot;Noto Serif CJK SC&quot;,serif" font-weight="600" >气路系统</text>
</g></svg>
<svg width="1034" height="13" viewBox="0 0 1034 13" shape-rendering="crispEdges" font-family="&quot;Liberation Serif&quot;,&quot;Noto Serif CJK SC&quot;,serif" font-size="12">
<rect x="0" y="0" width="1034" height="13" fill="#f0f0f0"/>
<g fill="#fff" stroke="none">
<rect x="0" y="0" width="59" height="8"/><rect x="90" y="0" width="98" height="8"/><rect x="208" y="0" width="148" height="8"/><rect x="364" y="0" width="158" height="8"/><rect x="530" y="0" width="122" height="8"/><rect x="661" y="0" width="122" height="8"/>
</g>
<rect x="662" y="0" width="99" height="7" fill="#ececec"/>
<g fill="#dde3ec">
<rect x="59" y="0" width="1" height="8"/><rect x="89" y="0" width="1" height="8"/><rect x="188" y="0" width="1" height="8"/><rect x="207" y="0" width="1" height="8"/><rect x="356" y="0" width="1" height="8"/><rect x="363" y="0" width="1" height="8"/><rect x="522" y="0" width="1" height="8"/><rect x="529" y="0" width="1" height="8"/><rect x="652" y="0" width="1" height="8"/><rect x="660" y="0" width="1" height="8"/><rect x="783" y="0" width="1" height="8"/>
</g>
<g fill="#222"><rect x="62" y="0" width="1" height="7"/><rect x="359" y="0" width="1" height="7"/><rect x="525" y="0" width="1" height="7"/><rect x="656" y="0" width="1" height="7"/></g>
<g fill="#999"><rect x="192" y="0" width="1" height="9"/></g>
<g fill="#c4c4c4"><rect x="199" y="0" width="1" height="8"/><rect x="203" y="0" width="1" height="8"/></g>
<g fill="#fff"><rect x="189" y="0" width="3" height="8"/><rect x="196" y="0" width="2" height="8"/><rect x="201" y="0" width="1" height="8"/></g>
<rect x="69" y="0" width="14" height="6" fill="#4f76ad"/><rect x="70" y="0" width="5" height="1" fill="#111"/><rect x="71" y="2" width="3" height="2" fill="#fff"/><rect x="75" y="2" width="3" height="2" fill="#e4ecff"/><rect x="79" y="2" width="3" height="2" fill="#c8d8ff"/><rect x="77" y="0" width="5" height="1" fill="#c8d8ff"/>
<rect x="213" y="0" width="10" height="3" fill="#000"/><rect x="214" y="0" width="8" height="2" fill="#0ff"/>
<g fill="#000" stroke="#000" stroke-width="0.25">
<text x="0" y="2.5">注</text>
<text x="94" y="2.4" textLength="48" lengthAdjust="spacingAndGlyphs">Standard</text>
<text x="227" y="2.4" textLength="41" lengthAdjust="spacingAndGlyphs">ByLayer</text>
<text x="433" y="2.4" textLength="41" lengthAdjust="spacingAndGlyphs">ByLayer</text>
<text x="574" y="2.4" textLength="41" lengthAdjust="spacingAndGlyphs">ByLayer</text>
<rect x="51" y="0" width="2" height="1"/><rect x="180" y="0" width="2" height="1"/><rect x="348" y="0" width="2" height="1"/><rect x="514" y="0" width="2" height="1"/><rect x="645" y="0" width="2" height="1"/>
</g>
<text x="669" y="3" fill="#868686">随颜色</text>
<rect x="771" y="0" width="2" height="1" fill="#999"/>
<rect x="0" y="8" width="660" height="1" fill="#eef0f4"/>
<rect x="660" y="8" width="124" height="1" fill="#b2b2b2"/>
<rect x="779" y="0" width="1" height="8" fill="#a8a8a8"/><rect x="783" y="0" width="1" height="9" fill="#ababab"/><rect x="780" y="0" width="3" height="8" fill="#f4f4f4"/>
<rect x="0" y="9" width="784" height="1" fill="#a8a8a8"/>
<rect x="0" y="10" width="784" height="1" fill="#f6f6f6"/>
<rect x="0" y="11" width="1034" height="1" fill="#a0a0a0"/>
<rect x="0" y="12" width="1034" height="1" fill="#404040"/>
</svg>
<div id="bl" style="left:6px;width:15px"></div><div id="bl2" style="position:absolute;top:735px;height:1px;background:#f0f0f0;left:22px;width:1012px"></div>
</body></html>
